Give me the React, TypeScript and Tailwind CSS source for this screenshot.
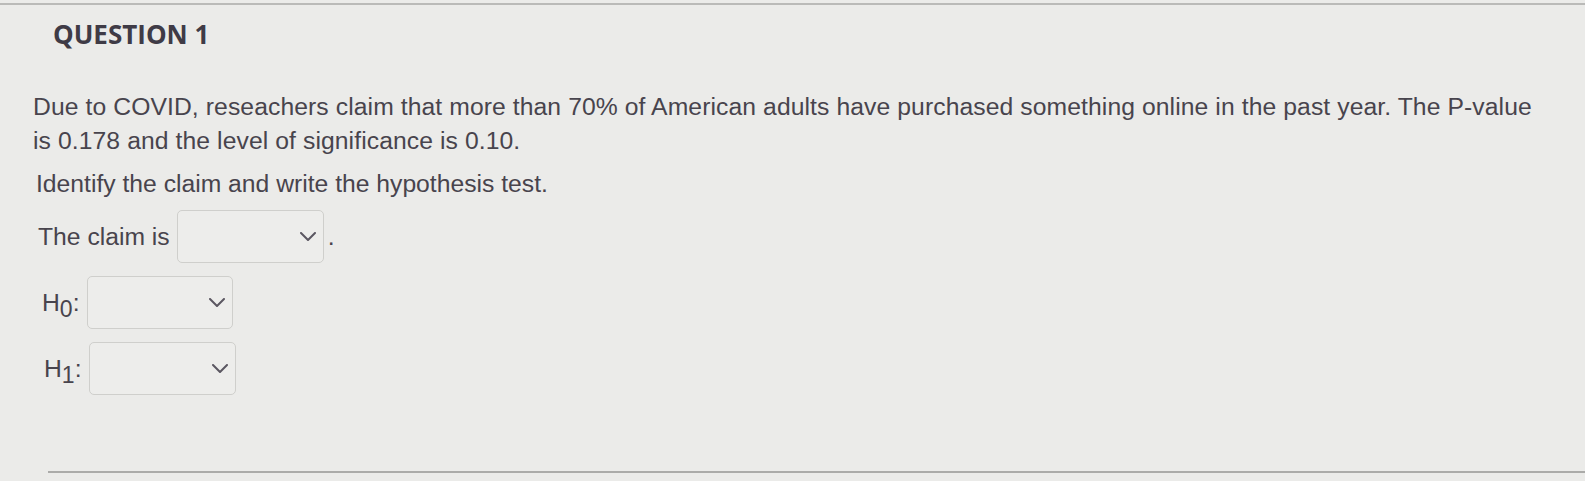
import React from "react";

function ChevronSelect({ width = 147 }: { width?: number }) {
  return (
    <div
      className="flex h-[53px] items-center justify-end rounded-[5px] border border-[#cfcfcc] bg-[#ededeb] pr-[7px]"
      style={{ width }}
    >
      <svg width="16" height="9" viewBox="0 0 16 9" fill="none">
        <path d="M1 1l7 7 7-7" stroke="#5b5761" strokeWidth="2" strokeLinecap="round" strokeLinejoin="round" />
      </svg>
    </div>
  );
}

function Hyp({ n }: { n: string }) {
  return (
    <span className="mr-[7px]">
      H<span className="relative top-[6px] text-[23px]">{n}</span>:
    </span>
  );
}

export default function App() {
  return (
    <div className="h-[481px] w-full overflow-hidden bg-[#ebebe9] text-[#48444d]">
      <div className="mt-[3px] h-[2px] w-full bg-[#babab8]" />

      <h1 className="ml-[53px] mt-[13px] font-['Open_Sans',sans-serif] text-[26px] font-bold leading-[32px] text-[#3f3b46]">
        QUESTION 1
      </h1>

      <div className="font-['Liberation_Sans',Arial,sans-serif] text-[24.7px] leading-[34px]">
        <p className="ml-[33px] mt-[40px] w-[1512px] tracking-[0.09px]">
          Due to COVID, reseachers claim that more than 70% of American adults have purchased something online in the past
          year. The P-value is 0.178 and the level of significance is 0.10.
        </p>
        <p className="ml-[36px] mt-[9px]">Identify the claim and write the hypothesis test.</p>

        <div className="ml-[38px] mt-[9px] flex items-center">
          <span className="mr-[7px]">The claim is</span>
          <ChevronSelect />
          <span className="ml-[4px]">.</span>
        </div>

        <div className="ml-[42px] mt-[13px] flex items-center">
          <Hyp n="0" />
          <ChevronSelect width={146} />
        </div>

        <div className="ml-[44px] mt-[13px] flex items-center">
          <Hyp n="1" />
          <ChevronSelect width={147} />
        </div>
      </div>

      <div className="ml-[48px] mt-[76px] h-[2px] bg-[#ababa9]" />
    </div>
  );
}
